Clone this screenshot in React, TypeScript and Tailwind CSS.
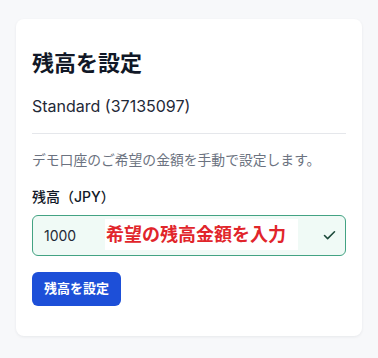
import { Check } from "lucide-react";

const font = { fontFamily: "Inter, 'Noto Sans CJK JP', sans-serif" };

export default function App() {
  return (
    <div className="min-h-[358px] w-[378px] bg-[#f7f8fa] pt-[19px]" style={font}>
      <div className="mx-4 rounded-lg bg-white px-4 pb-[30px] pt-[30px] shadow-[0_1px_3px_rgba(15,23,42,0.07)]">
        <h2 className="text-[22px] font-bold leading-7 text-[#111827]">残高を設定</h2>
        <div className="mt-[17px] text-base leading-6 text-[#1f2937]">Standard (37135097)</div>
        <div className="mt-[15px] h-px bg-[#e5e7eb]" />

        <p className="mt-4 text-[13.8px] leading-5 text-[#6b7280]">デモ口座のご希望の金額を手動で設定します。</p>

        <label className="mt-[17px] block text-sm font-medium leading-5 text-[#111827]">残高（JPY）</label>
        <div className="relative mt-2">
          <div className="flex h-[41px] items-center rounded-md border border-[#43a383] bg-[#f0faf6] pl-[11px] pr-2">
            <span className="flex-1 text-sm text-[#1f2937]">1000</span>
            <Check className="h-[15px] w-[15px] text-[#1d4a3b]" strokeWidth={2.5} />
          </div>
          <div className="absolute left-[73px] top-1 flex h-[31px] w-[193px] items-center bg-white pl-px text-lg font-bold text-[#e1252b]">
            希望の残高金額を入力
          </div>
        </div>

        <button className="mt-4 h-[34px] rounded-md bg-[#1d4fd8] px-3 text-[13px] font-bold text-white">
          残高を設定
        </button>
      </div>
    </div>
  );
}
